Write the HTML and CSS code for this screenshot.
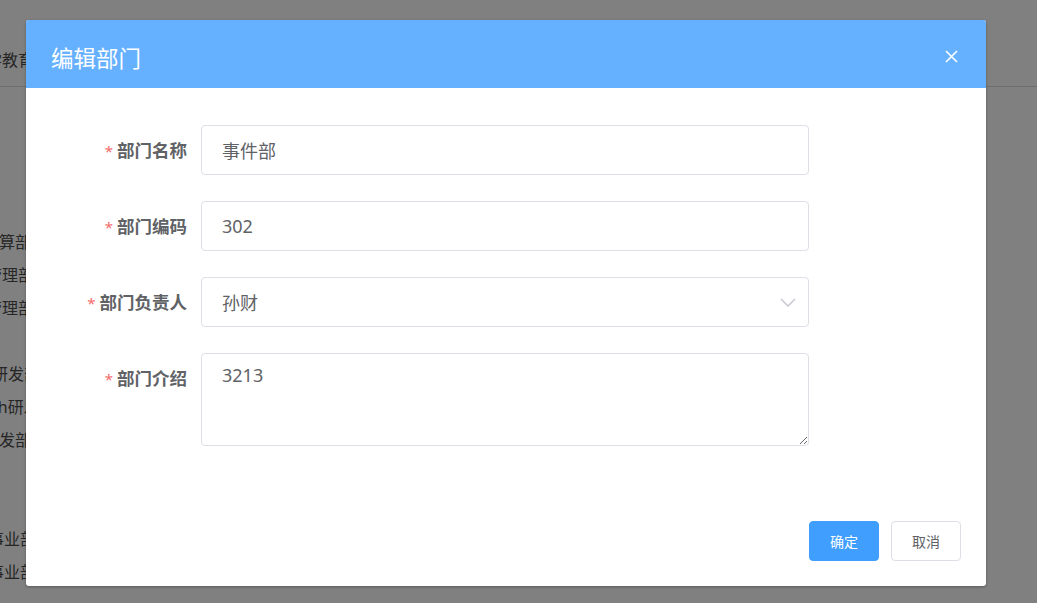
FILE: index.html
```html
<!DOCTYPE html>
<html lang="zh">
<head>
<meta charset="utf-8">
<title>编辑部门</title>
<link rel="stylesheet" href="styles.css">
</head>
<body>
<div class="page">
  <div class="page-header"><span class="clip t1">学教育</span></div>
  <ul class="page-list">
    <li><span class="clip r1">预算部</span></li>
    <li><span class="clip r2">管理部</span></li>
    <li><span class="clip r2">管理部</span></li>
    <li></li>
    <li><span class="clip r4">研发部</span></li>
    <li><span class="clip r5">th研发部</span></li>
    <li><span class="clip r1">研发部</span></li>
    <li></li>
    <li></li>
    <li><span class="clip r8">事业部</span></li>
    <li><span class="clip r8">事业部</span></li>
  </ul>
</div>

<div class="dialog">
  <div class="dialog-header">
    <span class="dialog-title">编辑部门</span>
    <button class="dialog-close" aria-label="关闭">
      <svg width="13" height="13" viewBox="0 0 13 13"><path d="M1 1L12 12M12 1L1 12" stroke="#fff" stroke-width="1.6" fill="none"/></svg>
    </button>
  </div>
  <div class="dialog-body">
    <form class="form">
      <div class="form-item">
        <label class="form-label"><span class="req">*</span>部门名称</label>
        <div class="field"><input class="input" type="text" value="事件部"></div>
      </div>
      <div class="form-item">
        <label class="form-label"><span class="req">*</span>部门编码</label>
        <div class="field"><input class="input" type="text" value="302"></div>
      </div>
      <div class="form-item">
        <label class="form-label"><span class="req">*</span>部门负责人</label>
        <div class="field select">
          <input class="input" type="text" value="孙财" readonly>
          <svg class="arrow" width="16" height="9" viewBox="0 0 16 9"><path d="M1 1L8 8L15 1" stroke="#c0c4cc" stroke-width="1.3" fill="none"/></svg>
        </div>
      </div>
      <div class="form-item">
        <label class="form-label"><span class="req">*</span>部门介绍</label>
        <div class="field"><textarea class="textarea">3213</textarea></div>
      </div>
    </form>
  </div>
  <div class="dialog-footer">
    <button class="btn btn-primary" type="button">确定</button>
    <button class="btn" type="button">取消</button>
  </div>
</div>
</body>
</html>
```

FILE: styles.css
```css
html, body {
  margin: 0;
  padding: 0;
}
body {
  background: #808080;
  font-family: "Noto Sans", "Noto Sans CJK SC", sans-serif;
  width: 1037px;
  height: 603px;
  overflow: hidden;
  position: relative;
}
.page {
  color: #262626;
  font-size: 16px;
}
.page-header {
  height: 87px;
  border-bottom: 1px solid #6e6e6e;
  padding-top: 48px;
  box-sizing: border-box;
  line-height: 24px;
  overflow: hidden;
  white-space: nowrap;
}
.clip {
  display: inline-block;
  white-space: nowrap;
}
.t1 { margin-left: -14px; }
.r1 { margin-left: -17px; }
.r2 { margin-left: -14px; }
.r4 { margin-left: -8px; }
.r5 { margin-left: -8px; }
.r8 { margin-left: -12px; }
.page-list {
  list-style: none;
  margin: 139px 0 0;
  padding: 0;
}
.page-list li {
  height: 33px;
  line-height: 33px;
  overflow: hidden;
}

.dialog {
  position: absolute;
  left: 26px;
  top: 20px;
  width: 960px;
  background: #fff;
  border-radius: 3px;
  box-shadow: 0 1px 3px rgba(0, 0, 0, 0.3);
  display: flex;
  flex-direction: column;
}
.dialog-header {
  height: 68px;
  background: #66b1ff;
  border-radius: 3px 3px 0 0;
  display: flex;
  align-items: center;
  justify-content: space-between;
  padding: 0 28px 0 25px;
}
.dialog-title {
  color: #fff;
  font-size: 22.5px;
  line-height: 30px;
  margin-top: 10px;
}
.dialog-close {
  border: 0;
  background: none;
  padding: 0;
  width: 13px;
  height: 13px;
  margin-top: 4px;
  display: flex;
  cursor: pointer;
}
.dialog-body {
  padding: 37px 25px 75px;
}
.form {
  display: flex;
  flex-direction: column;
  gap: 26px;
}
.form-item {
  display: flex;
  align-items: flex-start;
}
.form-label {
  width: 150px;
  height: 50px;
  box-sizing: border-box;
  padding-right: 14px;
  text-align: right;
  font-size: 17.5px;
  font-weight: 700;
  color: #606266;
  line-height: 50px;
  white-space: nowrap;
}
.req {
  color: #f56c6c;
  font-weight: 400;
  font-size: 15px;
  margin-right: 4px;
}
.field {
  width: 608px;
  position: relative;
}
.input, .textarea {
  display: block;
  width: 100%;
  box-sizing: border-box;
  border: 1px solid #dcdfe6;
  border-radius: 4px;
  font-family: "Noto Sans", "Noto Sans CJK SC", sans-serif;
  font-size: 18px;
  color: #606266;
  background: #fff;
  outline: none;
  margin: 0;
}
.input {
  height: 50px;
  padding: 0 20px;
}
.textarea {
  height: 93px;
  padding: 8px 20px;
  line-height: 27px;
  resize: vertical;
}
.arrow {
  position: absolute;
  right: 13px;
  top: 21px;
}
.dialog-footer {
  display: flex;
  justify-content: flex-end;
  gap: 12px;
  padding: 0 25px 25px;
}
.btn {
  width: 70px;
  height: 40px;
  box-sizing: border-box;
  border: 1px solid #dcdfe6;
  border-radius: 4px;
  background: #fff;
  color: #606266;
  font-family: "Noto Sans", "Noto Sans CJK SC", sans-serif;
  font-size: 14px;
  padding: 0;
  cursor: pointer;
}
.btn-primary {
  background: #409eff;
  border-color: #409eff;
  color: #fff;
}
```
